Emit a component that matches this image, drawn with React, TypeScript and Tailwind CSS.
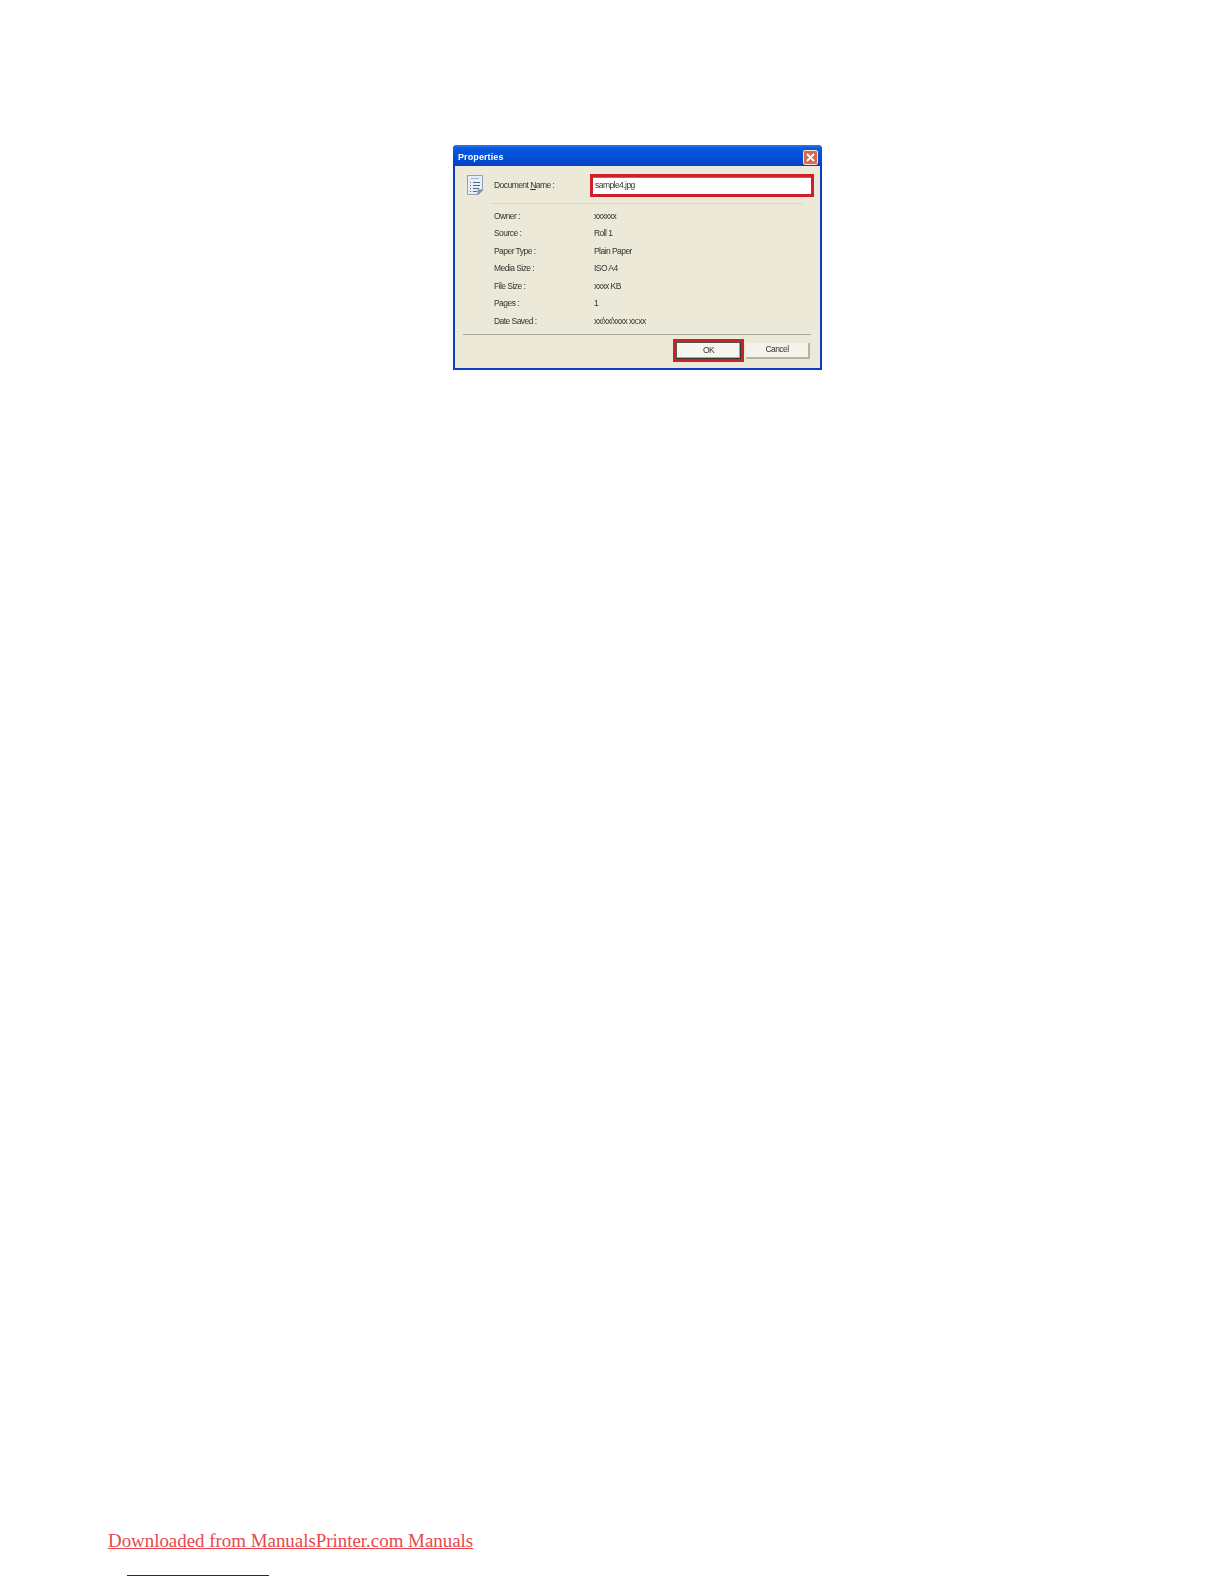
const rows = [
  ["Owner :", "xxxxxx"],
  ["Source :", "Roll 1"],
  ["Paper Type :", "Plain Paper"],
  ["Media Size :", "ISO A4"],
  ["File Size :", "xxxx KB"],
  ["Pages :", "1"],
  ["Date Saved :", "xx/xx/xxxx xx:xx"],
];

function DocIcon() {
  return (
    <svg width="16" height="20" viewBox="0 0 16 20">
      <path d="M0.500 0.500h15v14.500l-4.500 4.500h-10.500z" fill="#eaeff7" stroke="#8fa0b8" />
      <path d="M11 19.500v-4.500h4.500z" fill="#8c97a8" stroke="#7d8b9f" />
      <path d="M4 3.500h8" stroke="#a3b1c6" />
      <path d="M3 7.500h1M6 7.500h7M3 10.500h1M6 10.500h7M3 13.500h1M6 13.500h6M3 16.500h1M6 16.500h4" stroke="#52688a" />
    </svg>
  );
}

export default function App() {
  return (
    <div className="w-[1224px] h-[1584px] bg-white flex flex-col pt-[145px] font-['Liberation_Sans',sans-serif]">
      <div className="ml-[453px] w-[369px] h-[225px] flex flex-col bg-[#0a3fc4] rounded-t-[4px] overflow-hidden blur-[0.35px]">
        <div className="h-[21px] shrink-0 flex items-center justify-between pl-[5px] pr-[4px] bg-[linear-gradient(180deg,#2a7ee8_0%,#0a5ae0_14%,#0350d8_50%,#0348d0_80%,#0a3fb8_100%)]">
          <span className="text-[9px] font-bold text-white tracking-[0.1px] leading-none mt-[3px]">Properties</span>
          <span className="w-[15px] h-[15px] mt-[3px] rounded-[2px] border border-[#f4e4dc] bg-[#d9694a] flex items-center justify-center">
            <svg width="11" height="11" viewBox="0 0 11 11">
              <path d="M2 2l7 7M9 2l-7 7" stroke="#fff" strokeWidth="1.800" />
            </svg>
          </span>
        </div>
        <div className="flex-1 mx-[2px] mb-[2px] bg-[#ece9d8] flex flex-col text-[8.500px] tracking-[-0.55px] text-[#333] leading-none">
          <div className="flex items-start pl-[12px] pt-[8px]">
            <div className="w-[27px] shrink-0 pt-[1px]"><DocIcon /></div>
            <div className="flex-1 flex items-center">
              <span className="w-[96px] shrink-0">Document <span className="underline">N</span>ame :</span>
              <div className="w-[224px] h-[23px] border-[3px] border-[#cf1f27] bg-white flex items-center pl-[2px] shadow-[inset_0_1px_0_#7f7f7f]">sample4.jpg</div>
            </div>
          </div>
          <div className="h-px bg-[#d8d5c4] ml-[37px] mr-[18px] mt-[6px]" />
          <div className="flex flex-col pl-[39px] mt-[3px]">
            {rows.map(([k, v]) => (
              <div key={k} className="h-[17.500px] flex items-center">
                <span className="w-[100px] shrink-0">{k}</span>
                <span>{v}</span>
              </div>
            ))}
          </div>
          <div className="h-px bg-[#a9a79a] ml-[8px] mr-[9px] mt-[4px]" />
          <div className="flex items-start pl-[218px] mt-[4px]">
            <div className="w-[71px] h-[23px] border-[3px] border-[#cf1f27] flex">
              <div className="flex-1 bg-[#f6f5ee] border border-[#555] border-r-[#333] border-b-[#333] shadow-[inset_-1px_-1px_0_#aaa] flex items-center justify-center">OK</div>
            </div>
            <div className="w-[64px] h-[16px] ml-[2px] mt-[4px] bg-[#f4f3ea] border-r-2 border-b-2 border-[#b5b3a2] flex items-center justify-center">Cancel</div>
          </div>
        </div>
      </div>
      <div className="mt-[1160px] ml-[108px] text-[18.900px] leading-[22px] text-[#e8484c] underline font-['Liberation_Serif',serif]">
        Downloaded from ManualsPrinter.com Manuals
      </div>
      <div className="mt-[23px] ml-[127px] w-[142px] h-px bg-[#14209a]" />
    </div>
  );
}
